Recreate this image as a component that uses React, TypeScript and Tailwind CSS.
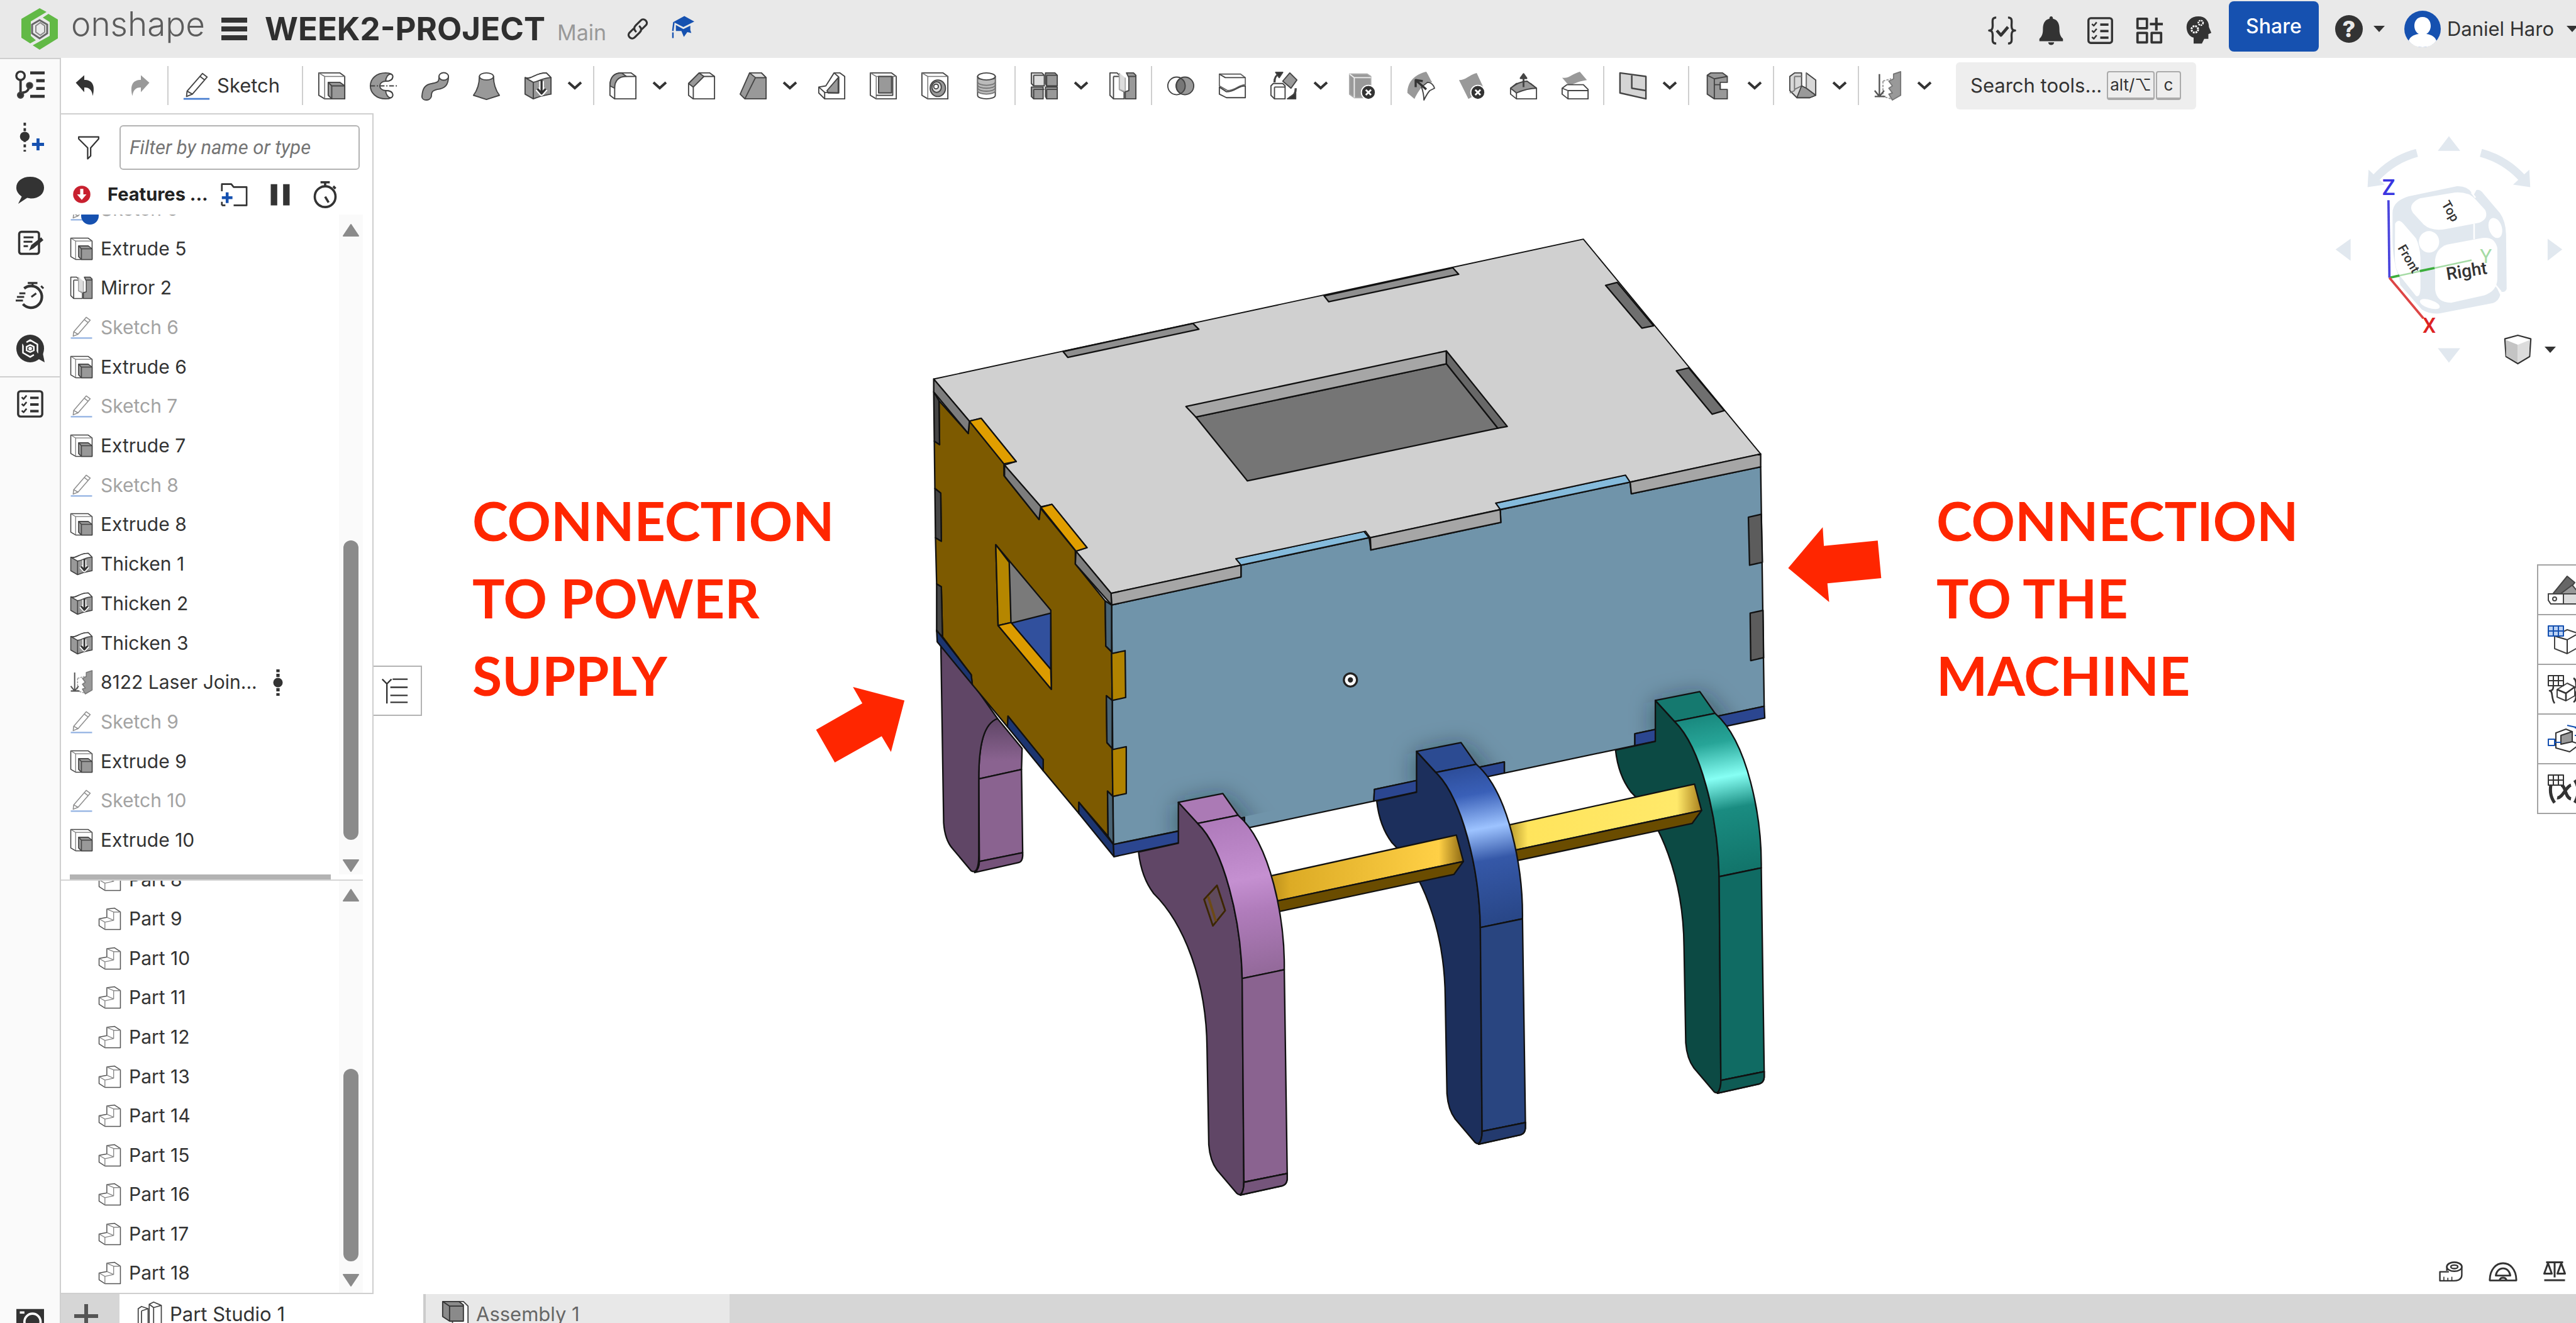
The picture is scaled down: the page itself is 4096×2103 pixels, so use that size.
import React from 'react';

type IconProps = { name: string; className?: string };

const G = '#999999';
const D = '#333333';
const B = '#1651b0';

const box = (
  <>
    <path d="M1 1h18l4 3v19H6l-5-3z" />
    <path d="M1 1l5 3v19M6 4h17" stroke="#777" strokeWidth=".8" fill="none" />
  </>
);

const badge = (
  <>
    <circle cx="17" cy="17.500" r="6" fill={D} stroke="#fff" />
    <path d="M14.800 15.300l4.400 4.400M19.200 15.300l-4.400 4.400" stroke="#fff" strokeWidth="1.500" />
  </>
);

const grid = (color: string, fill: string) => (
  <>
    <path d="M1 1h12v8H1z" fill={fill} stroke={color} />
    <path d="M1 5h12M5 1v8M9 1v8" stroke={color} />
  </>
);

const icons: Record<string, React.ReactNode> = {
  extrude: (
    <>
      {box}
      <path d="M9 9h10l4 3v11H12l-3-3z" fill={G} />
      <path d="M9 9l3 3v11M12 12h11" fill="none" />
    </>
  ),
  revolve: (
    <>
      <path d="M14 1C6 1 1 6 1 12s5 11 13 11c4 0 6-1 6-3 0-3-3-4-6-4-3 0-5-2-5-4s2-4 5-4c3 0 6-1 6-4 0-2-2-3-6-3z" fill={G} />
      <path d="M20 4c0 3-3 4-6 4 0-3 2-6 4-6 1 0 2 1 2 2zM20 20c0-3-3-4-6-4 0 3 2 6 4 6 1 0 2-1 2-2z" fill="#fff" />
      <path d="M1 12h23" strokeDasharray="4 1.500 1 1.500" />
    </>
  ),
  sweep: (
    <>
      <path d="M15.500 4c0 5-1 5-6 6-6 1-8 4-8.500 11 0 4 7 4 8 0 0-4 1-5 5-6 7-1 9.500-4 9.500-11z" fill={G} />
      <ellipse cx="19.500" cy="4" rx="4" ry="3.200" />
    </>
  ),
  loft: (
    <>
      <path d="M6 4c0 6-2 12-5 16l11 3.500L23 20c-3-4-5-10-5-16z" fill={G} />
      <ellipse cx="12" cy="4" rx="6" ry="3" />
    </>
  ),
  thicken: (
    <>
      <path d="M1 5c6 2 8-4 18-4l4 4v14c-6 1-8 1-15 4l-7-4z" fill={G} />
      <path d="M1 5c6 2 8-4 18-4l4 4C16 5 14 8 8 9z" fill="#fff" />
      <path d="M8 9v14" />
      <path d="M15 8v10M11.500 14.500L15 18.500l3.500-4" fill="none" stroke="#fff" strokeWidth="4" />
      <path d="M15 7v11M11.500 14.500L15 18.500l3.500-4" fill="none" stroke={D} strokeWidth="1.800" />
    </>
  ),
  fillet: (
    <>
      <path d="M1 12C1 5 4 1 11 1h8l4 3v19H5l-4-3z" />
      <path d="M1 12C1 5 4 1 11 1l4 3C8 4 5 8 5 14z" fill={G} />
      <path d="M15 4h8M5 14v9" fill="none" />
    </>
  ),
  chamfer: (
    <>
      <path d="M1 10l9-9h9l4 3v19H5l-4-3z" />
      <path d="M1 10l9-9 4 3-9 9z" fill={G} />
      <path d="M14 4h9M5 13v10" fill="none" />
    </>
  ),
  draft: (
    <>
      <path d="M1 19L9 1h10l4 4v18H5z" fill={G} />
      <path d="M5 23l9-18h9" fill="none" />
      <path d="M9 1l5 4h9l-4-4z" fill="#ddd" />
    </>
  ),
  rib: (
    <>
      <path d="M1 13l6-1 7-11h5l4 3v19H6l-5-5z" />
      <path d="M8 16L17.500 5v13H9z" fill={G} />
      <path d="M1 13l5 4.500V23M14 1l4 3.500v13.500l-12-.5" fill="none" />
    </>
  ),
  shell: (
    <>
      {box}
      <path d="M8 4h11v14H8z" fill={G} />
      <path d="M6 20h14V4" fill="none" />
    </>
  ),
  hole: (
    <>
      {box}
      <ellipse cx="14.500" cy="14" rx="6.500" ry="7" fill={G} />
      <ellipse cx="13.500" cy="13" rx="4" ry="4.500" fill="#ddd" />
      <circle cx="13" cy="12.500" r="2" />
    </>
  ),
  thread: (
    <>
      <path d="M4.500 4v16c0 4 15 4 15 0V4z" />
      <path d="M4.500 6v10c0 4 15 4 15 0V6z" fill="#bbb" stroke="#777" />
      <ellipse cx="12" cy="4" rx="7.500" ry="3" />
      <path d="M4.500 8.500c0 4 15 4 15 0M4.500 11c0 4 15 4 15 0M4.500 13.500c0 4 15 4 15 0" fill="none" stroke="#777" />
    </>
  ),
  pattern: (
    <>
      <path d="M1 1h9l2 2v9H3l-2-2z" fill="#ddd" />
      <path d="M13 1h8l2 2v9h-9l-1-2zM1 13h10v10H3l-2-2zM13 13h10v10h-9l-1-2z" fill={G} />
      <path d="M3 3h9M3 3v9M14 3h9M14 3v9M3 15h9M3 15v8M14 15h9M14 15v8" fill="none" />
    </>
  ),
  mirror: (
    <>
      <path d="M1 1h6l2 2v12l4 2v6H4l-3-3z" />
      <path d="M4 4h5M4 4v19" fill="none" />
      <path d="M9 1v14l5 2V5" fill="#ddd" stroke="#aaa" />
      <path d="M15 1h6l2 2v20h-9v-6l3-1V5z" fill={G} />
      <path d="M17 4h6" />
    </>
  ),
  boolean: (
    <>
      <circle cx="8.500" cy="12" r="7.500" />
      <circle cx="15.500" cy="12" r="7.500" fill={G} />
      <path d="M12 5.500a7.500 7.500 0 010 13 7.500 7.500 0 010-13z" fill="#777" />
    </>
  ),
  split: (
    <>
      <path d="M1 2h18l4 3v6c-6 0-8 5-15 5l-7-4z" stroke="#666" />
      <path d="M1 13l6 4c8 0 9-5 16-5v10H7l-6-3z" />
      <path d="M1 2l5 3h17" fill="none" />
    </>
  ),
  transform: (
    <>
      <path d="M1 12l2-2h8l2 2v11H4l-3-3z" />
      <path d="M4 13h9M4 13v10" />
      <path d="M11 8l6-7 6 6-5 7z" fill={G} />
      <path d="M4 9C4 5 5 3 8 2M22 14c0 4-1 6-5 8" fill="none" strokeWidth="1.800" />
      <path d="M5 .500h6L8 5zM15 23h7v-5z" fill={D} />
    </>
  ),
  deletePart: (
    <>
      <path d="M1 2h15l3 2v18H5l-4-3z" fill={G} stroke="#aaa" />
      <path d="M1 2l4 3v17M5 5h14" stroke="#eee" fill="none" />
      {badge}
    </>
  ),
  modifyFillet: (
    <>
      <path d="M1 18C1 8 8 2 17 0c2 3 3 6 5 9-6 0-10 4-15 14z" fill={G} stroke="none" />
      <path d="M13 13l5-4c3 0 5 2 6 5l-4 2c-2 2-3 4-5 8 0-5-1-8-2-11z" />
      <path d="M17 15L9 8M8 13V7l6 1" fill="none" stroke={D} strokeWidth="1.800" />
    </>
  ),
  deleteFace: (
    <>
      <path d="M1 7c6 0 8-4 15-6l6 13-4 4-9 5z" fill={G} stroke="none" />
      {badge}
    </>
  ),
  moveFace: (
    <>
      <path d="M1 14l5-4h12l5 4v9H6l-5-4z" />
      <path d="M1 14c5-4 9-6 14-6l8 6c-6 0-10 1-17 4z" fill={G} />
      <path d="M6 18v5" />
      <path d="M12 13V3M9.500 5.500L12 2l2.500 3.500z" fill={D} strokeWidth="1.500" />
    </>
  ),
  replaceFace: (
    <>
      <path d="M1 5c6 1 8-3 15-5l6 7c-6 1-9 2-15 5z" fill={G} stroke="none" />
      <path d="M1 14l4-3h14l4 4v8H6l-5-4z" />
      <path d="M1 14l5 2h17M6 16v7" fill="none" />
    </>
  ),
  sheetMetal: (
    <>
      <path d="M1 1l22 3v19L1 18z" fill="#d5d5d5" strokeWidth="1.300" />
      <path d="M11 3v11l12 2" fill="none" strokeWidth="1.300" />
    </>
  ),
  frame: (
    <>
      <path d="M3 3l3-2h10l4 3v5h-6v6h6v8H9l-6-4z" fill={G} />
      <path d="M3 3l6 3v17M9 6l11-2M9 11h5v4" fill="none" />
    </>
  ),
  plastic: (
    <>
      <path d="M1 4l4-3h6v11l4 2V1l8 6v13l-5 2H7l-6-6z" fill="#d8d8d8" />
      <path d="M5 4h6M5 4v12l-4 2M5 15l6-3M15 14l8 6M15 1v13l-8 8" fill="none" stroke="#777" />
      <path d="M11 12l4 2 8 6-5 2H7z" fill={G} />
    </>
  ),
  laser: (
    <>
      <path d="M17 2l6-2v20l-7 4-3-5 3-1-3-4 3-2-3-4 4-2z" fill={G} stroke="#777" />
      <path d="M8 8l7-2M8 8v13l7 2" fill="none" stroke="#999" strokeDasharray="2 1" />
      <path d="M5 2v18M1 16l4 5 4-5M1 21h9" fill="none" stroke="#555" strokeWidth="1.300" />
    </>
  ),
  sketch: (
    <>
      <path d="M4 16.500L17 1.500l4 3L8.500 19l-5 2z" />
      <path d="M4 16.500l4.500 2.500M15 4l4 3" />
      <path d="M1 23h22" stroke="#4a7fd0" strokeWidth="1.500" />
    </>
  ),
  part: (
    <>
      <path d="M1 12l8-1.500V2l8-1 6 4v18H7l-6-4z" stroke="#555" />
      <path d="M1 12l6 3.500V23M7 15.500l9-2V5L9 2M16 5h7M16 13.500l-7-3" fill="none" stroke="#888" strokeWidth=".9" />
    </>
  ),
  studio: (
    <>
      <path d="M1 7l3-2 6 2v16H4l-3-2z" />
      <path d="M11 3l4-2 7 3v19h-7l-4-2z" />
      <path d="M4 9v14M4 9l6-2M15 6v17M15 6l7-2M11 3l4 3" fill="none" />
    </>
  ),
  assembly: (
    <>
      <path d="M8 1h11l4 4v19H10z" />
      <path d="M1 1h14l4 3v14H7l-6-4z" fill="#8a8a8a" stroke={D} />
      <path d="M1 1l6 4h12M7 5v13" stroke={D} fill="none" />
    </>
  ),
  tree: (
    <>
      <circle cx="4" cy="5" r="3.500" fill="none" stroke={D} strokeWidth="1.800" />
      <path d="M4 8v15M4 19c4 0 7-1 7-6" fill="none" stroke={D} strokeWidth="2" />
      <circle cx="4" cy="21" r="2.500" fill={D} />
      <circle cx="11.500" cy="13" r="2.500" fill={D} />
      <path d="M12 2.500h12M17 9h7M17 15.500h7M12 22h12" stroke={D} strokeWidth="2.500" />
    </>
  ),
  insert: (
    <>
      <path d="M7.500 0v24" stroke={D} strokeWidth="2" strokeDasharray="2.500 2" />
      <circle cx="7.500" cy="11.500" r="4" fill={D} stroke="none" />
      <path d="M18.500 13v10M13.500 18h10" stroke={B} strokeWidth="2.500" />
    </>
  ),
  comment: <path d="M12 1c7 0 11.500 4 11.500 9s-4 9-11 9l-3-.5L2 23.500l3-6C2 15 .5 13 .5 10 .5 5 5 1 12 1z" fill={D} stroke="none" />,
  notes: (
    <>
      <rect x="2" y="2" width="18" height="20" rx="2" fill="none" stroke={D} strokeWidth="2" />
      <path d="M6 7h9M6 11h8M6 15h4" stroke={D} strokeWidth="1.800" />
      <path d="M11 19l2-5 9-7 2 2.500-9 7.500z" fill={D} stroke="none" />
    </>
  ),
  stopwatchFast: (
    <>
      <path d="M7 6a9 9 0 11-1 13" fill="none" stroke={D} strokeWidth="2.200" />
      <path d="M10 1.500h8M14 2v3M21 4l2 2M3 10h5M1 13h6M0 16h6M13 13l4-3" fill="none" stroke={D} strokeWidth="1.600" />
    </>
  ),
  stopwatch: (
    <>
      <circle cx="12" cy="14" r="9" fill="none" stroke={D} strokeWidth="2" />
      <path d="M8 1.500h8M12 2v3M19 5l2 2M12 14l3 5" stroke={D} strokeWidth="2" />
    </>
  ),
  help3d: (
    <>
      <circle cx="12" cy="12" r="11.500" fill={D} stroke="none" />
      <path d="M16 19l8 4.500-2-10z" fill={D} stroke="none" />
      <path d="M12 5l6 3.500v7L12 19l-6-3.500v-7zM12 9l3 1.500v3L12 15l-3-1.500v-3z" fill="none" stroke="#fff" strokeWidth="1.300" />
      <path d="M6 8.500L9 7M18 15.500l-3 1.500" stroke={D} strokeWidth="2.500" />
      <circle cx="12" cy="12" r="1.500" fill="#fff" stroke="none" />
    </>
  ),
  checklist: (
    <>
      <rect x="2" y="1.500" width="20" height="21" rx="2" fill="none" stroke={D} strokeWidth="1.800" />
      <path d="M5 6.500l1.500 1.500L9 5M5 12l1.500 1.500L9 10.500M5 17.500L6.500 19 9 16" fill="none" stroke={D} strokeWidth="1.300" />
      <path d="M12 7h7M12 12.500h7M12 18h7" stroke={D} strokeWidth="2" />
    </>
  ),
  camera: (
    <>
      <path d="M0 1h24v20H0z" fill={D} stroke="none" />
      <circle cx="14" cy="12" r="7" fill={D} stroke="#fff" strokeWidth="2" />
      <path d="M3 4h4" stroke="#fff" strokeWidth="2" />
    </>
  ),
  undo: <path d="M1 9l9-8v5c8 0 12 5 9 17-1-6-3-9-9-9v5z" fill="currentColor" stroke="none" />,
  redo: <path d="M23 9l-9-8v5C6 6 2 11 5 23c1-6 3-9 9-9v5z" fill="currentColor" stroke="none" />,
  funnel: <path d="M2 1h20v2l-8 9v8l-3 3V12L2 3z" fill="none" stroke={D} strokeWidth="1.400" />,
  error: (
    <>
      <circle cx="12" cy="12" r="11" fill="#c8202f" stroke="none" />
      <path d="M10 5h4v7h4l-6 7-6-7h4z" fill="#fff" stroke="none" />
    </>
  ),
  folder: (
    <>
      <path d="M2 9V3h8l2 2.500h11V21H12M2 21v-3M2 21h3" fill="none" stroke={D} strokeWidth="1.400" />
      <path d="M6.500 10v9M2 14.500h9" stroke={B} strokeWidth="2.400" />
    </>
  ),
  pause: <path d="M4 3h5.500v18H4zM14.500 3H20v18h-5.500z" fill={D} stroke="none" />,
  rollback: (
    <>
      <path d="M10.500 0h3v2.500h-3zM10.500 4h3v3h-3zM10.500 17h3v3h-3zM10.500 21.500h3V24h-3z" fill={D} stroke="none" />
      <circle cx="12" cy="12" r="4.300" fill={D} stroke="none" />
    </>
  ),
  listToggle: (
    <path d="M1 2l4 4 4-4M5 6v17M10 2h13M8 9h15M8 16h15M8 22h15" fill="none" stroke={D} strokeWidth="1.300" />
  ),
  link: (
    <path d="M10 14.500c-2-2-2-4 0-6l5-5c3-3 8 1 5.500 4.500l-4 4M14 9.500c2 2 2 4 0 6l-5 5c-3 3-8-1-5.500-4.500l4-4" fill="none" stroke={D} strokeWidth="2" strokeLinecap="round" />
  ),
  gradCap: (
    <>
      <path d="M14 1l10 5.500L13 12 3 7z" fill={B} stroke="none" />
      <path d="M5.500 10l7.500 4 7-3.500V15l1 3-4-1-3.500 5-2.500-6H5.500z" fill={B} stroke="none" />
      <path d="M3.500 7l-1 8v8" fill="none" stroke={B} strokeWidth="1.500" strokeDasharray="9 1.500" />
    </>
  ),
  variables: (
    <>
      <path d="M7 1C3 1 4 4 4 8c0 3-1 4-3 4 2 0 3 1 3 4 0 4-1 7 3 7M17 1c4 0 3 3 3 7 0 3 1 4 3 4-2 0-3 1-3 4 0 4 1 7-3 7" fill="none" stroke={D} strokeWidth="1.800" />
      <path d="M7.500 12l3.500 4 6-7" fill="none" stroke={D} strokeWidth="2.500" />
    </>
  ),
  bell: <path d="M12 0c1 0 1.500.7 1.500 2C18 3 19 7 19 11c0 4 1 6 3 8v2H2v-2c2-2 3-4 3-8 0-4 1-8 5.500-9C10.500.7 11 0 12 0zM9.500 22h5c0 3-5 3-5 0z" fill={D} stroke="none" />,
  apps: (
    <>
      <path d="M2 2h8v8H2zM2 14h8v8H2zM14 14h8v8h-8z" fill="none" stroke={D} strokeWidth="2" />
      <path d="M18 1v11M12.500 6.500h11" stroke={D} strokeWidth="2.200" />
    </>
  ),
  advisor: (
    <>
      <path d="M12 0c6 0 9 4 9 9l2 5-2.500 1v4H17l-2 4H8v-5C4 17 2 13 2 9c0-5 4-9 10-9z" fill={D} stroke="none" />
      <circle cx="9" cy="11" r="2.800" fill="none" stroke="#fff" strokeWidth="1.600" strokeDasharray="1.500 .7" />
      <circle cx="14" cy="5.500" r="2" fill="none" stroke="#fff" strokeWidth="1.300" strokeDasharray="1.300 .6" />
    </>
  ),
  swatches: (
    <>
      <path d="M3 17L16 1l6 5-9 11z" fill="#666" />
      <path d="M8 17l12-9 5 6-8 6z" fill={G} />
      <path d="M1 15h26v8H3l-2-3z" fill="#ddd" />
      <path d="M1 15h12v8H3l-2-3z" />
      <circle cx="6" cy="19" r="1.500" />
    </>
  ),
  bomTable: (
    <>
      <path d="M6 9l10-5 9 3v11l-9 5-10-4z" />
      <path d="M6 9l10 3 9-5M16 12v11" fill="none" stroke={D} />
      {grid(B, '#bcd3f5')}
    </>
  ),
  configTable: (
    <>
      <path d="M8 12l8-5 6 3v7l-7 4-7-3z" />
      <path d="M8 12l7 3 7-5M15 15v6M5 8c0 3 0 5-3 5 3 0 1 6 4 10M21 3c4 2 0 8 4 9-4 1 0 8-4 10" fill="none" stroke={D} strokeWidth="1.300" />
      {grid(D, '#fff')}
    </>
  ),
  dimensions: (
    <>
      <path d="M7 7l8-3 5 2v8l6 2-8 6-11-3z" fill="#fff" stroke={D} />
      <path d="M11 9l9-3v8l-9 2z" fill={G} stroke={D} />
      <path d="M1 12h5v5H1zM6 14.500h5M16 1l9 2M22 3h4v6h-4" fill="none" stroke={B} />
    </>
  ),
  variableTable: (
    <>
      <path d="M3 9c-1 6 0 10 3 14M22 5c4 6 3 13 0 18M8 19c4 1 7-9 11-10M11 9c4 0 3 10 8 11" fill="none" stroke={D} strokeWidth="2.500" />
      {grid(D, '#fff')}
    </>
  ),
  tape: (
    <>
      <path d="M8 12V8c0-6 15-6 15 0v8c0 4-3 6-8 6H1v-9h9" stroke={D} strokeWidth="1.500" />
      <ellipse cx="15.500" cy="8" rx="7.500" ry="4.500" stroke={D} strokeWidth="1.500" />
      <ellipse cx="15.500" cy="8" rx="3.500" ry="1.800" stroke={D} strokeWidth="1.500" />
      <path d="M5 22v-4M9 22v-3M13 22v-4" stroke={D} />
    </>
  ),
  protractor: (
    <>
      <path d="M1 20C1 1 23 1 23 20zM6 16c1-8 11-8 12 0z" stroke={D} strokeWidth="1.500" />
      <path d="M9 20c1-3 5-3 6 0" fill="none" stroke={D} strokeWidth="1.500" />
    </>
  ),
  scales: (
    <path d="M3 3h18M12 3v16M1 22h22M5 4L1 15h8zM19 4l-4 11h8z" fill="none" stroke={D} strokeWidth="2" />
  ),
  cube: (
    <>
      <path d="M1 3l11-3 11 3-1 15-10 6L2 18z" fill="#fff" stroke={D} strokeWidth="1.200" />
      <path d="M2 4l10 4v15L2 17.500z" fill="#c4c4c4" stroke="none" />
      <path d="M22 4L12 8v15l9.500-5.500z" fill="#dcdcdc" stroke="none" />
    </>
  ),
};

function Icon({ name, className = 'w-[45px] h-[45px]' }: IconProps) {
  return (
    <svg viewBox="0 0 24 24" className={`shrink-0 overflow-visible ${className}`} fill="#fff" stroke="#444" strokeWidth="1" strokeLinejoin="round" aria-hidden="true">
      {icons[name]}
    </svg>
  );
}

function Caret() {
  return (
    <svg viewBox="0 0 18 10" className="w-[18px] h-[10px] shrink-0" aria-hidden="true">
      <path d="M0 0h18l-9 10z" fill={D} />
    </svg>
  );
}

function Tool({ name }: { name: string }) {
  return (
    <button aria-label={name} className="w-[82px] h-[62px] shrink-0 flex items-center justify-center">
      <Icon name={name} />
    </button>
  );
}

function More({ label }: { label: string }) {
  return (
    <button aria-label={`More ${label} tools`} className="w-[43px] h-[62px] shrink-0 flex items-center pl-[6px]">
      <svg viewBox="0 0 24 14" className="w-[24px] h-[14px]" fill="none" stroke={D} strokeWidth="4" aria-hidden="true">
        <path d="M2 2l10 9L22 2" />
      </svg>
    </button>
  );
}

const Sep = () => (
  <div className="w-[10px] h-[62px] shrink-0 flex justify-center">
    <div className="w-[2px] bg-[#cfcfcf]" />
  </div>
);

// '>' marks a drop-down after the tool before it
const toolGroups = [
  ['extrude', 'revolve', 'sweep', 'loft', 'thicken', '>'],
  ['fillet', '>', 'chamfer', 'draft', '>', 'rib', 'shell', 'hole', 'thread'],
  ['pattern', '>', 'mirror'],
  ['boolean', 'split', 'transform', '>', 'deletePart'],
  ['modifyFillet', 'deleteFace', 'moveFace', 'replaceFace'],
  ['sheetMetal', '>'],
  ['frame', '>'],
  ['plastic', '>'],
  ['laser', '>'],
];

const features = [
  { icon: 'sketch', label: 'Sketch 5', hidden: true, badge: true },
  { icon: 'extrude', label: 'Extrude 5' },
  { icon: 'mirror', label: 'Mirror 2' },
  { icon: 'sketch', label: 'Sketch 6', hidden: true },
  { icon: 'extrude', label: 'Extrude 6' },
  { icon: 'sketch', label: 'Sketch 7', hidden: true },
  { icon: 'extrude', label: 'Extrude 7' },
  { icon: 'sketch', label: 'Sketch 8', hidden: true },
  { icon: 'extrude', label: 'Extrude 8' },
  { icon: 'thicken', label: 'Thicken 1' },
  { icon: 'thicken', label: 'Thicken 2' },
  { icon: 'thicken', label: 'Thicken 3' },
  { icon: 'laser', label: '8122 Laser Join...', rollback: true },
  { icon: 'sketch', label: 'Sketch 9', hidden: true },
  { icon: 'extrude', label: 'Extrude 9' },
  { icon: 'sketch', label: 'Sketch 10', hidden: true },
  { icon: 'extrude', label: 'Extrude 10' },
];

const parts = [8, 9, 10, 11, 12, 13, 14, 15, 16, 17, 18];

function Header() {
  return (
    <header className="h-[92px] shrink-0 bg-[#e9e9e9] flex items-center pl-[34px] whitespace-nowrap">
      <svg viewBox="0 0 58 66" className="w-[58px] h-[66px] shrink-0" aria-hidden="true">
        <path d="M29 0l11 6-25 15v23l8 7-9 5L0 47V17z" fill="#62b946" />
        <path d="M43 9l15 9v30L29 66l-11-7 27-15V22L34 15z" fill="#62b946" />
        <path d="M29 19l12 7v14l-12 8-12-8V26z" fill="none" stroke="#666" strokeWidth="3" />
        <path d="M30 23l7 5v10l-7 5-7-5V28z" fill="none" stroke="#888" strokeWidth="2" />
      </svg>
      <a href="#home" className="ml-[21px] pb-[15px] w-[239px] text-[53px] font-light text-[#5c5c5c]">onshape</a>
      <button aria-label="Document menu" className="w-[41px] flex flex-col gap-[6px]">
        <span className="h-[8px] bg-[#333333]" />
        <span className="h-[8px] bg-[#333333]" />
        <span className="h-[8px] bg-[#333333]" />
      </button>
      <div className="ml-[28px] flex items-baseline gap-[19px]">
        <h1 className="text-[51px] font-bold text-[#2f2f2f]">WEEK2-PROJECT</h1>
        <span className="text-[34px] text-[#999999]">Main</span>
      </div>
      <button aria-label="Copy link" className="ml-[31px]"><Icon name="link" className="w-[38px] h-[38px]" /></button>
      <a href="#learning" aria-label="Learning" className="ml-[32px] pb-[6px]"><Icon name="gradCap" className="w-[40px] h-[38px]" /></a>
      <div className="ml-auto flex items-center">
        {['variables', 'bell', 'checklist', 'apps', 'advisor'].map((name) => (
          <button key={name} aria-label={name} className="w-[78px] h-[92px] pt-[4px] flex items-center justify-center">
            <Icon name={name} className="w-[45px] h-[45px]" />
          </button>
        ))}
        <button className="ml-[9px] w-[143px] h-[80px] self-start mt-[2px] rounded-[8px] bg-[#1651b0] text-white text-[32px] font-medium">Share</button>
        <button aria-label="Help" className="ml-[26px] flex items-center gap-[17px]">
          <span className="w-[44px] h-[44px] rounded-full bg-[#333333] text-[#e9e9e9] text-[36px] leading-[44px] font-extrabold">?</span>
          <Caret />
        </button>
        <button className="ml-[31px] flex items-center text-[31px] text-[#333333]">
          <svg viewBox="0 0 58 58" className="w-[58px] h-[58px]" aria-hidden="true">
            <circle cx="29" cy="29" r="29" fill={B} />
            <path d="M29 10c9 0 13 7 13 14 0 6-3 11-7 13 9 1 15 6 16 11-6 7-13 10-22 10S13 55 7 48c1-5 7-10 16-11-4-2-7-7-7-13 0-7 4-14 13-14z" fill="#fff" />
          </svg>
          <span className="ml-[10px] mr-[20px]">Daniel Haro</span>
          <span className="w-[15px] overflow-hidden"><Caret /></span>
        </button>
      </div>
    </header>
  );
}

function Toolbar() {
  return (
    <div className="h-[88px] shrink-0 flex items-center pl-[4px] text-[31px] text-[#333333] whitespace-nowrap">
      <button aria-label="Undo" className="w-[72px] flex justify-center text-[#333333]"><Icon name="undo" className="w-[36px] h-[36px]" /></button>
      <button aria-label="Redo" className="ml-[12px] w-[72px] flex justify-center text-[#999999]"><Icon name="redo" className="w-[36px] h-[36px]" /></button>
      <div className="ml-[5px]"><Sep /></div>
      <button className="ml-[18px] mr-[25px] w-[161px] flex items-center gap-[10px]">
        <Icon name="sketch" />
        Sketch
      </button>
      {toolGroups.map((group, i) => (
        <React.Fragment key={i}>
          <Sep />
          {group.map((t, j) => (t === '>' ? <More key={j} label={group[j - 1]} /> : <Tool key={j} name={t} />))}
        </React.Fragment>
      ))}
      <button className="ml-[25px] w-[382px] h-[75px] shrink-0 rounded-[6px] bg-[#eeeeee] flex items-center pl-[23px]">
        <span className="w-[217px] text-left">Search tools...</span>
        <kbd className="w-[76px] h-[46px] border-2 border-b-4 border-[#aaaaaa] rounded-[4px] font-[Inter,sans-serif] text-[26px] leading-[40px]">alt/⌥</kbd>
        <kbd className="ml-[2px] w-[40px] h-[46px] border-2 border-b-4 border-[#aaaaaa] rounded-[4px] font-[Inter,sans-serif] text-[26px] leading-[40px]">c</kbd>
      </button>
    </div>
  );
}

function Rail() {
  return (
    <nav className="w-[97px] shrink-0 bg-[#fafafa] border-r-2 border-[#cfcfcf] shadow-[inset_0_2px_0_#cfcfcf] flex flex-col">
      <div className="flex flex-col h-[508px] border-b-2 border-[#cfcfcf]">
        {['tree', 'insert', 'comment', 'notes', 'stopwatchFast', 'help3d'].map((name) => (
          <button key={name} aria-label={name} className="h-[84px] flex items-center justify-center">
            <Icon name={name} className={name === 'notes' ? 'w-[42px] h-[42px]' : 'w-[46px] h-[46px]'} />
          </button>
        ))}
      </div>
      <button aria-label="Tasks" className="h-[84px] flex items-center justify-center">
        <Icon name="checklist" className="w-[46px] h-[46px]" />
      </button>
      <button aria-label="Capture" className="mt-auto h-[24px] flex justify-center overflow-hidden">
        <Icon name="camera" className="w-[44px] h-[44px]" />
      </button>
    </nav>
  );
}

function Arrow({ down }: { down?: boolean }) {
  return (
    <svg viewBox="0 0 26 20" className="w-[26px] h-[20px] shrink-0" aria-hidden="true">
      <path d={down ? 'M1 1h24L13 19z' : 'M1 19h24L13 1z'} fill="#8b8b8b" stroke="#8b8b8b" strokeLinejoin="round" strokeWidth="2" />
    </svg>
  );
}

function FeaturePanel() {
  return (
    <aside className="w-[497px] shrink-0 border-t-2 border-r-2 border-b-2 border-[#cfcfcf] flex flex-col text-[30px] text-[#333333] whitespace-nowrap">
      <div className="h-[105px] shrink-0 flex items-center pl-[25px]">
        <Icon name="funnel" className="w-[38px] h-[38px]" />
        <input
          aria-label="Filter by name or type"
          placeholder="Filter by name or type"
          className="ml-[30px] w-[382px] h-[71px] border-2 border-[#b3b3b3] rounded-[6px] px-[14px] font-[Roboto,sans-serif] text-[31px] italic placeholder:text-[#757575]"
        />
      </div>
      <div className="h-[54px] shrink-0 flex items-center pl-[18px] pb-[10px]">
        <Icon name="error" className="w-[30px] h-[30px]" />
        <h2 className="ml-[26px] w-[178px] text-[29px] font-bold text-[#222222]">Features ...</h2>
        <button aria-label="New folder" className="w-[46px] mr-[28px]"><Icon name="folder" /></button>
        <button aria-label="Pause" className="w-[46px] mr-[26px]"><Icon name="pause" /></button>
        <button aria-label="Regeneration times" className="w-[46px]"><Icon name="stopwatch" className="w-[44px] h-[44px]" /></button>
      </div>
      <div className="h-[1049px] shrink-0 flex">
        <div className="w-[442px] h-[1026px] flex flex-col justify-end overflow-hidden pl-[14px]">
          <ul className="h-[1066px] shrink-0 flex flex-col">
            {features.map((f) => (
              <li key={f.label} className={`flex-1 flex items-center gap-[12px] ${f.hidden ? 'text-[#a3a3a3]' : ''}`}>
                <span className="relative">
                  <Icon name={f.icon} className={f.hidden ? 'w-[37px] h-[37px] opacity-60' : 'w-[37px] h-[37px]'} />
                  {f.badge && <span className="absolute left-[18px] top-[15px] w-[28px] h-[28px] rounded-full bg-[#1651b0]" />}
                </span>
                {f.label}
                {f.rollback && <Icon name="rollback" className="ml-auto mr-[77px] w-[42px] h-[42px]" />}
              </li>
            ))}
          </ul>
        </div>
        <div className="w-[38px] flex flex-col items-center bg-[#fafafa] pt-[15px] pb-[4px]">
          <Arrow />
          <div className="mt-[483px] w-[24px] h-[476px] rounded-full bg-[#8b8b8b]" />
          <div className="mt-auto"><Arrow down /></div>
        </div>
      </div>
      <div className="ml-[14px] w-[415px] h-[8px] shrink-0 bg-[#b3b3b3]" />
      <div className="flex-1 min-h-0 flex border-t-2 border-[#d5d5d5] mr-[15px]">
        <div className="w-[442px] flex flex-col justify-end overflow-hidden pl-[59px]">
          <ul className="h-[688px] shrink-0 flex flex-col">
            {parts.map((n) => (
              <li key={n} className="flex-1 flex items-center gap-[12px]">
                <Icon name="part" className="w-[37px] h-[37px]" />
                Part {n}
              </li>
            ))}
          </ul>
        </div>
        <div className="w-[38px] flex flex-col items-center bg-[#fafafa] pt-[13px] pb-[10px]">
          <Arrow />
          <div className="mt-[266px] w-[24px] h-[306px] rounded-full bg-[#8b8b8b]" />
          <div className="mt-auto"><Arrow down /></div>
        </div>
      </div>
    </aside>
  );
}

type LegProps = { x: number; y: number; id: string; side: string; cap: string; front: string; band: string[] };

// All three legs are the same body, moved along the rod
function Leg({ x, y, id, side, cap, front, band }: LegProps) {
  return (
    <g transform={`translate(${x} ${y})`}>
      <defs>
        <linearGradient id={id} gradientUnits="userSpaceOnUse" x1="2040" y1="1400" x2="2090" y2="1670">
          {band.map((c, i) => (
            <stop key={i} offset={[0, 0.2, 0.42, 0.62, 1][i]} stopColor={c} />
          ))}
        </linearGradient>
      </defs>
      <path d="M2012 1370V1440L1944 1455C1947 1482 1954 1505 1970 1526C2020 1575 2060 1672 2061 1790L2064 1955Q2066 1982 2078 1998L2112 2038Q2120 2045 2124 2028L2121 1671C2119 1570 2090 1450 2045 1406Z" fill={side} />
      <path d="M2012 1370L2088 1355L2114 1392L2045 1406Z" fill={cap} />
      <path d="M2045 1406L2114 1392C2170 1440 2194 1570 2193 1656L2121 1671C2119 1570 2090 1450 2045 1406Z" fill={`url(#${id})`} />
      <path d="M2121 1671L2193 1656L2198 2004L2124 2019Z" fill={front} />
      <path d="M2124 2019L2198 2004V2014Q2197 2023 2190 2025L2118 2041Q2124 2034 2124 2019Z" fill={side} />
      <path d="M2124 2019L2198 2004V2014Q2197 2023 2190 2025L2118 2041Q2124 2034 2124 2019Z" fill={front} fillOpacity=".5" />
    </g>
  );
}

function Rod({ x, y, id, colors }: { x: number; y: number; id: string; colors: string[] }) {
  return (
    <g transform={`translate(${x} ${y})`}>
      <defs>
        <linearGradient id={id} x1="0" y1="0" x2="1" y2="0">
          {colors.map((c, i) => (
            <stop key={i} offset={[0, 0.15, 0.88, 1][i]} stopColor={c} />
          ))}
        </linearGradient>
      </defs>
      <path d="M2150 1500L2487 1426L2499 1471L2160 1543Z" fill={`url(#${id})`} />
      <path d="M2160 1543L2499 1471L2483 1493L2168 1560Z" fill="#6a4c00" />
    </g>
  );
}

function Model() {
  return (
    <g stroke="#111" strokeWidth="2.500" strokeLinejoin="round">
      <defs>
        <clipPath id="faceClip">
          <path d="M1898 1033L3007 797L3013 1206L1901 1442Z" />
        </clipPath>
        <filter id="soft" x="-50%" y="-50%" width="200%" height="200%">
          <feGaussianBlur stdDeviation="20" />
        </filter>
        <linearGradient id="arch" x1="0" y1="0" x2="0" y2="1">
          <stop offset="0" stopColor="#5e4565" />
          <stop offset=".7" stopColor="#8a6390" />
        </linearGradient>
      </defs>

      {/* rear leg */}
      <path d="M1671 1330C1671 1270 1680 1235 1703 1227L1745 1278L1744 1314Z" fill="url(#arch)" />
      <path d="M1671 1330L1744 1314L1746 1456L1672 1471Z" fill="#8a6390" />
      <path d="M1672 1471L1746 1456Q1747 1471 1739 1473L1664 1490Q1672 1484 1672 1471Z" fill="#75527a" />
      <path d="M1606 1090L1611 1405Q1613 1434 1626 1449L1658 1487Q1671 1494 1671 1460V1330C1671 1270 1680 1235 1703 1227Z" fill="#604666" />

      {/* side wall */}
      <path
        d="M1603 684L1653 740L1655 719L1714 791V812L1774 887L1776 867L1836 940V963L1887 1026L1888 1103L1898 1113L1899 1196L1889 1188L1890 1268L1899 1278L1900 1360L1891 1351L1892 1428L1842 1370V1389L1781 1316V1297L1721 1223L1720 1241L1660 1169L1658 1152L1609 1087L1607 1002L1599 997L1597 918L1607 924L1606 842L1596 834L1595 753L1604 759Z"
        fill="#7d5a00"
      />
      <path d="M1594 669L1603 684L1604 759L1595 753ZM1596 834L1606 842L1607 924L1597 918ZM1599 997L1607 1002L1609 1087L1599 1078Z" fill="#454545" />
      <path d="M1599 1076L1658 1152L1660 1169L1600 1096ZM1721 1223L1781 1297V1316L1720 1241ZM1842 1370L1901 1442L1902 1463L1842 1389Z" fill="#1c3570" />
      <path d="M1700 930L1794 1042L1795 1177L1704 1068Z" fill="#7a7a7a" />
      <path d="M1726 1064L1794 1047V1143Z" fill="#31509d" />
      <path d="M1700 930L1723 960L1726 1063L1704 1068Z" fill="#b58600" />
      <path d="M1704 1068L1726 1063L1794 1143L1795 1177Z" fill="#dc9b00" />

      {/* front wall */}
      <path
        d="M1898 1033L2119 985V965L2338 918L2341 939L2563 892L2562 870L2784 823L2786 843L3007 797L3013 1206L2792 1253V1273L2569 1320V1301L2347 1348L2346 1368L2125 1415V1396L1901 1442Z"
        fill="#7094aa"
      />
      <path d="M2110 954L2329 907L2338 918L2119 965ZM2554 859L2776 811L2784 823L2562 870Z" fill="#85bbdc" />
      <g clipPath="url(#faceClip)" stroke="none" fill="#16222c" fillOpacity=".5" filter="url(#soft)">
        <path d="M2010 1375L2092 1358L2150 1420L2010 1440Z" />
        <path d="M2417 1288L2499 1271L2557 1333L2417 1353Z" />
        <path d="M2825 1201L2907 1184L2965 1246L2825 1266Z" />
      </g>
      <path d="M1887 1026L1898 1033V1113L1888 1103ZM1889 1188L1899 1196V1278L1890 1268ZM1891 1351L1900 1360L1901 1442L1892 1428Z" fill="#4a6474" />
      <path d="M1898 1116L1921 1111L1922 1191L1899 1196ZM1899 1280L1923 1275V1355L1900 1360Z" fill="#b08200" />
      <path d="M2986 883L3008 878L3010 960L2988 965ZM2989 1047L3011 1042L3012 1123L2990 1128Z" fill="#5c5c5c" />
      <path d="M1901 1442L2125 1396V1415L1902 1463ZM2347 1348L2569 1301V1320L2346 1368ZM2792 1253L3013 1206L3014 1226L2792 1273Z" fill="#2b4690" />

      {/* lid */}
      <path
        d="M1594 647L2704 408L3007 775L2784 823L2776 811L2554 859L2562 870L2340 918L2332 907L2110 954L2119 965L1897 1013L1837 941L1856 935L1796 861L1777 865L1715 794L1735 788L1675 714L1655 719Z"
        fill="#d0d0d0"
        strokeWidth="2"
      />
      <path d="M1897 1013L2119 965V985L1898 1033ZM2340 918L2562 870L2563 892L2341 939ZM2784 823L3007 775V797L2786 843Z" fill="#a6a6a6" />
      <path d="M1594 647L1655 719L1653 740L1594 669ZM1715 794L1777 865L1774 887L1715 813ZM1837 941L1897 1013L1898 1033L1836 963Z" fill="#7d7d7d" />
      <path d="M1655 719L1675 714L1735 788L1714 792ZM1777 866L1796 861L1856 935L1837 941Z" fill="#e09e00" />
      <path d="M1815 600L2037 552L2047 562L1823 610ZM2261 505L2481 457L2491 468L2269 515Z" fill="#8f8f8f" />
      <path d="M2742 487L2762 482L2824 556L2804 560ZM2863 633L2884 628L2945 701L2924 707Z" fill="#6f6f6f" />
      <path d="M2042 712L2470 621L2558 731L2130 821Z" fill="#757575" />
      <path d="M2025 694L2470 599V621L2042 712Z" fill="#a6a6a6" />
      <path d="M2470 599L2574 728L2558 731L2470 621Z" fill="#686868" />

      <Leg x={815} y={-174} id="teal" side="#0c4a44" cap="#15796f" front="#106b63" band={['#17857b', '#27a598', '#86fff4', '#1a8c81', '#12756b']} />
      <Rod x={407} y={-87} id="rodB" colors={['#8a6a10', '#ffe45c', '#ffe96a', '#a87f1c']} />
      <Leg x={407} y={-87} id="blue" side="#1c2f5c" cap="#2c4b92" front="#294580" band={['#2b4b96', '#3a60b8', '#9dc3ff', '#3558a8', '#294788']} />
      <Rod x={0} y={0} id="rodA" colors={['#a87f16', '#dcab25', '#ffd046', '#8c6812']} />
      <Leg x={0} y={0} id="purple" side="#604666" cap="#ab7ab5" front="#8a6390" band={['#ad79b9', '#b883c4', '#c590d1', '#b07cbb', '#946a9b']} />
      <path d="M2078 1512L2056 1536L2071 1581L2092 1555Z" fill="#604a5c" stroke="#3c2600" strokeWidth="3" />
      <path d="M2063 1531L2076 1573" stroke="#6d4a14" strokeWidth="4" />

      <circle cx="2306" cy="1161" r="10" fill="#7094aa" stroke="#222" strokeWidth="6" />
      <circle cx="2306" cy="1161" r="7" fill="#222" stroke="#fff" strokeWidth="5" />
    </g>
  );
}

function ViewCube() {
  return (
    <g fontFamily="Roboto, sans-serif">
      <g transform="translate(3900 200) scale(.3333)" fill="#e1e8ef">
        <path d="M849 97L792 172H907ZM268 677L345 622V735ZM1430 677L1355 622V735ZM849 1257L792 1183H907Z" />
        <path d="M685 182Q560 215 470 315M1013 182Q1138 215 1228 315" fill="none" stroke="#e1e8ef" strokeWidth="42" />
        <path d="M437 268L432 358L520 345ZM1261 268L1266 358L1178 345Z" />
        <path d="M560 490Q560 430 640 405L890 353Q940 350 965 385L975 400L990 372Q1010 368 1025 390L1110 490Q1140 530 1142 600L1145 880Q1135 900 1118 893L1090 862L1112 910Q1105 940 1075 952L800 1005Q750 1010 710 985L600 860L595 830L578 775Q558 700 560 600Z" />
        <g fill="#fff">
          <path d="M700 415L880 385Q950 380 985 420L1035 475Q1055 520 1005 540L830 573Q760 585 720 550L665 490Q635 445 700 415Z" />
          <path d="M573 545Q590 515 615 545L680 620Q700 660 703 720V880Q700 925 680 915L600 815Q572 780 572 720Z" />
          <path d="M778 730Q785 670 840 652L1020 618Q1085 610 1097 670V830Q1095 890 1030 912L860 950Q785 950 778 880Z" />
          <ellipse cx="747" cy="638" rx="52" ry="55" />
          <ellipse cx="1087" cy="567" rx="33" ry="53" transform="rotate(-18 1087 567)" />
          <ellipse cx="751" cy="957" rx="53" ry="21" transform="rotate(18 751 957)" />
        </g>
        <path d="M978 545V625M965 385L985 412M1088 860L1115 893" stroke="#fff" strokeWidth="8" />
        <path d="M544 822L965 732" stroke="#a5dba5" strokeWidth="8" />
        <path d="M544 822L595 811M700 788L775 772" stroke="#3cae3c" strokeWidth="12" />
        <path d="M539 425L544 822" stroke="#4a45dd" strokeWidth="12" />
        <path d="M544 822L718 1030" stroke="#dd4545" strokeWidth="12" />
      </g>
      <text x="4069" y="333" fontSize="37" fontWeight="500" fill="#3a35e0">Z</text>
      <text x="4138" y="568" fontSize="36" fontWeight="500" fill="#dd2222">X</text>
      <text x="4236" y="449" fontSize="34" fill="#a5dba5">Y</text>
      <text x="4180" y="478" fontSize="30" fontWeight="500" fill="#333" transform="rotate(-9 4180 478)">Right</text>
      <text x="4170" y="348" fontSize="22" fontWeight="500" fill="#333" transform="rotate(60 4170 348)">Top</text>
      <text x="4095" y="423" fontSize="22" fontWeight="500" fill="#333" transform="rotate(60 4095 423)">Front</text>
    </g>
  );
}

function Viewport() {
  return (
    <main className="relative flex-1 min-w-0 overflow-hidden">
      <svg viewBox="637 193 3763 2017" className="absolute inset-0 w-full h-full" role="img" aria-label="Box on four legs">
        <Model />
        <ViewCube />
        <path d="M1456 1173L1544 1196L1521 1284L1505 1257L1425 1302L1393 1246L1472 1201Z" fill="#ff2600" />
        <path d="M3054 970L3113 900L3115 932L3207 923L3213 987L3121 996L3124 1028Z" fill="#ff2600" />
      </svg>

      <p className="absolute left-[157px] top-[585px] font-[Lato,sans-serif] font-bold text-[86px] leading-[123px] text-[#ff2600] whitespace-nowrap">
        CONNECTION<br />TO POWER<br />SUPPLY
      </p>
      <p className="absolute left-[2485px] top-[585px] font-[Lato,sans-serif] font-bold text-[86px] leading-[123px] text-[#ff2600] whitespace-nowrap">
        CONNECTION<br />TO THE<br />MACHINE
      </p>

      <button aria-label="Show feature list" className="absolute left-0 top-[878px] w-[77px] h-[80px] bg-white border-2 border-l-0 border-[#b3b3b3] flex items-center pl-[12px]">
        <Icon name="listToggle" className="w-[44px] h-[44px]" />
      </button>

      <button aria-label="View options" className="absolute right-[32px] top-[353px] flex items-center gap-[20px]">
        <Icon name="cube" />
        <Caret />
      </button>

      <div className="absolute right-0 top-[717px] w-[62px] border-l-2 border-[#a3a3a3] border-b-2 bg-white">
        {['swatches', 'bomTable', 'configTable', 'dimensions', 'variableTable'].map((name) => (
          <button key={name} aria-label={name} className="h-[79px] w-full border-t-2 border-[#a3a3a3] flex items-center pl-[14px] overflow-hidden">
            <Icon name={name} className="w-[48px] h-[48px]" />
          </button>
        ))}
      </div>

      <div className="absolute right-[16px] bottom-[14px] flex items-center gap-[40px]">
        <button aria-label="Measure"><Icon name="tape" className="w-[38px] h-[38px]" /></button>
        <button aria-label="Angle"><Icon name="protractor" className="w-[48px] h-[46px]" /></button>
        <button aria-label="Mass properties"><Icon name="scales" className="w-[36px] h-[36px]" /></button>
      </div>
    </main>
  );
}

function TabBar() {
  return (
    <footer className="h-[46px] shrink-0 overflow-hidden bg-[#d6d6d6]">
      <div className="h-[64px] flex text-[31px] text-[#333333] whitespace-nowrap">
        <button aria-label="New tab" className="w-[93px] flex items-center justify-center pr-[14px] pt-[6px]">
          <span className="relative w-[38px] h-[38px]">
            <span className="absolute left-0 top-[16px] w-[38px] h-[6px] bg-[#555555]" />
            <span className="absolute left-[16px] top-0 w-[6px] h-[38px] bg-[#555555]" />
          </span>
        </button>
        <button className="w-[483px] bg-white flex items-center gap-[10px] pl-[28px]">
          <Icon name="studio" className="w-[42px] h-[42px]" />
          Part Studio 1
        </button>
        <button className="w-[487px] bg-[#e8e8e8] border-l-4 border-[#cccccc] flex items-center gap-[11px] pl-[25px] text-[#666666]">
          <Icon name="assembly" className="w-[44px] h-[44px]" />
          Assembly 1
        </button>
      </div>
    </footer>
  );
}

export default function App() {
  return (
    <div className="h-screen flex flex-col overflow-hidden bg-white font-[Inter,sans-serif]">
      <Header />
      <div className="flex-1 min-h-0 flex">
        <Rail />
        <div className="flex-1 min-w-0 flex flex-col">
          <Toolbar />
          <div className="flex-1 min-h-0 flex">
            <FeaturePanel />
            <Viewport />
          </div>
          <TabBar />
        </div>
      </div>
    </div>
  );
}
